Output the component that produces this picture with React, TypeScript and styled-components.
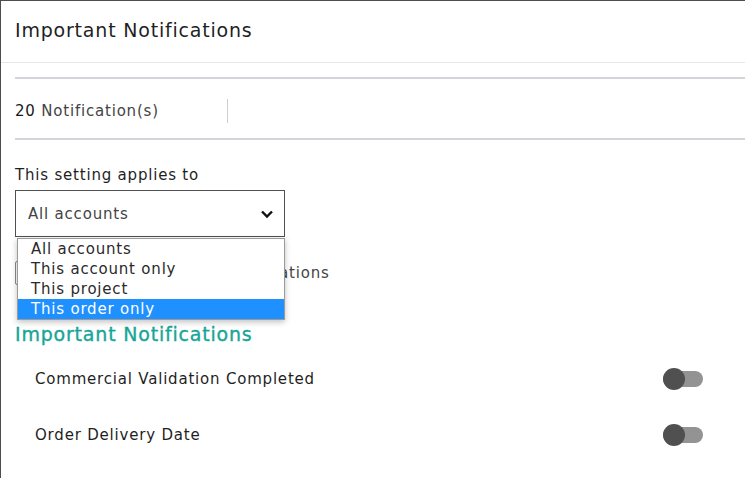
import React from "react";
import styled, { createGlobalStyle } from "styled-components";

const GlobalStyle = createGlobalStyle`
	html, body {
		margin: 0;
		padding: 0;
		background: #ffffff;
	}
	body {
		font-family: "DejaVu Sans", "Liberation Sans", sans-serif;
		letter-spacing: 0.05em;
		color: #222222;
	}
`;

const Frame = styled.div`
	width: 744px;
	height: 477px;
	border-top: 1px solid #4d4d4d;
	border-left: 1px solid #4d4d4d;
	overflow: hidden;
	background: #ffffff;
`;

const Header = styled.div`
	height: 57px;
	padding: 0 0 4px 14px;
	display: flex;
	align-items: center;
	font-size: 19px;
	letter-spacing: 0.042em;
	color: #1f1f1f;
	border-bottom: 1px solid #e6e6e6;
`;

const Body = styled.div`
	padding: 14px 0 0 14px;
`;

const StatsBar = styled.div`
	height: 59px;
	display: flex;
	align-items: center;
	border-top: 2px solid #d3d5da;
	border-bottom: 2px solid #d3d5da;
`;

const Count = styled.div`
	width: 212px;
	font-size: 15px;
	color: #444;
	padding-top: 4px;

	b {
		font-weight: 500;
		color: #1a1a1a;
	}
`;

const Divider = styled.div`
	width: 1px;
	height: 24px;
	margin-top: 4px;
	background: #cfcfcf;
`;

const Label = styled.div`
	margin-top: 25px;
	line-height: 20px;
	font-size: 15px;
	color: #1f1f1f;
`;

const SelectWrap = styled.div`
	position: relative;
	width: 270px;
	margin-top: 5px;
`;

const SelectBox = styled.div`
	height: 45px;
	border: 1px solid #505050;
	display: flex;
	align-items: center;
	justify-content: space-between;
	padding: 0 10px 0 12px;
	font-size: 15px;
	color: #444;
`;

const Options = styled.ul`
	position: absolute;
	top: 48px;
	left: 2px;
	right: 0;
	margin: 0;
	padding: 0;
	list-style: none;
	background: #fff;
	border: 1px solid #9a9a9a;
	box-shadow: 0 2px 6px rgba(0, 0, 0, 0.25);
	z-index: 5;
`;

const Option = styled.li<{ $active?: boolean }>`
	height: 20px;
	line-height: 20px;
	padding-left: 13px;
	font-size: 15px;
	color: ${(p) => (p.$active ? "#ffffff" : "#2a2a2a")};
	background: ${(p) => (p.$active ? "#1e90ff" : "transparent")};
`;

const CheckRow = styled.div`
	height: 24px;
	display: flex;
	align-items: center;
	gap: 10px;
	margin-top: 24px;
	font-size: 15px;
	color: #444;
	white-space: nowrap;
`;

const Box = styled.div`
	width: 14px;
	height: 22px;
	border: 1px solid #8a8a8a;
	border-radius: 2px;
`;

const Section = styled.div`
	margin-top: 37px;
	line-height: 24px;
	font-size: 19px;
	letter-spacing: 0.042em;
	color: #17a598;
	-webkit-text-stroke: 0.35px #17a598;
`;

const List = styled.div`
	padding: 5px 0 0 20px;
	width: 668px;
`;

const Row = styled.div`
	height: 56px;
	display: flex;
	align-items: center;
	justify-content: space-between;
	font-size: 15px;
	color: #1f1f1f;
`;

const Toggle = styled.div`
	position: relative;
	width: 40px;
	height: 16px;
	border-radius: 8px;
	background: #939393;

	&::before {
		content: "";
		position: absolute;
		left: 0;
		top: -3px;
		width: 22px;
		height: 22px;
		border-radius: 50%;
		background: #505050;
	}
`;

function Chevron() {
	return (
		<svg width="14" height="10" viewBox="0 0 14 10">
			<path d="M2 2.5 L7 7.5 L12 2.5" fill="none" stroke="#111" strokeWidth="2.4" />
		</svg>
	);
}

const choices = ["All accounts", "This account only", "This project", "This order only"];
const items = ["Commercial Validation Completed", "Order Delivery Date"];

export default function App() {
	return (
		<>
			<GlobalStyle />
			<Frame>
				<Header>Important Notifications</Header>
				<Body>
					<StatsBar>
						<Count>
							<b>20</b> Notification(s)
						</Count>
						<Divider />
					</StatsBar>
					<Label>This setting applies to</Label>
					<SelectWrap>
						<SelectBox>
							All accounts
							<Chevron />
						</SelectBox>
						<Options>
							{choices.map((c, i) => (
								<Option key={c} $active={i === 3}>
									{c}
								</Option>
							))}
						</Options>
					</SelectWrap>
					<CheckRow>
						<Box />
						Switch off all of these notifications
					</CheckRow>
					<Section>Important Notifications</Section>
					<List>
						{items.map((t) => (
							<Row key={t}>
								{t}
								<Toggle />
							</Row>
						))}
					</List>
				</Body>
			</Frame>
		</>
	);
}
